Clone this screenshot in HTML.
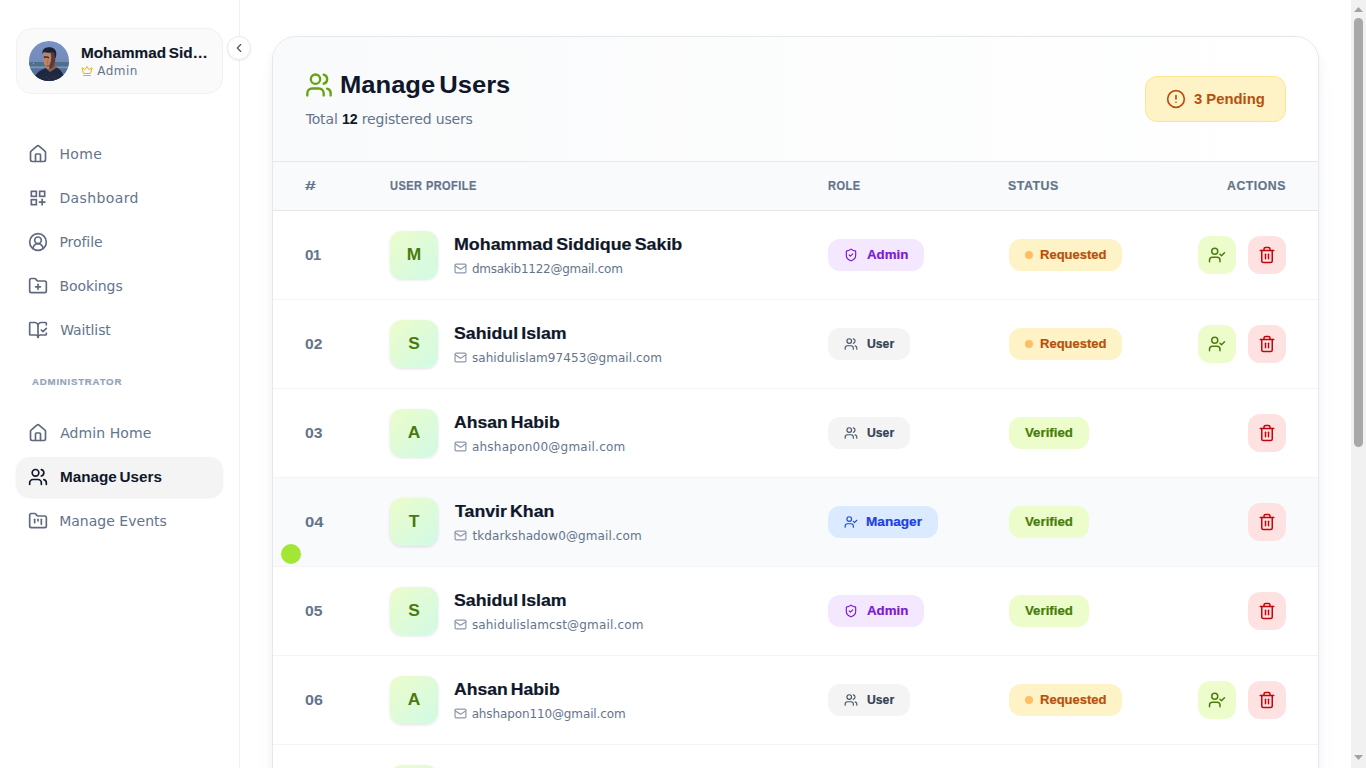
<!DOCTYPE html>
<html lang="en">
<head>
<meta charset="utf-8">
<title>Manage Users</title>
<style>
*{box-sizing:border-box;margin:0;padding:0}
button{border:0;padding:0;font:inherit;display:block;cursor:pointer}
a{text-decoration:none;cursor:pointer}
html,body{width:1366px;height:768px;overflow:hidden;background:#fff}
body{position:relative;font-family:"Liberation Sans",sans-serif;color:#0f172a}
.t{position:absolute;white-space:nowrap;line-height:24px;font-weight:400}
.ic{position:absolute;display:block;overflow:visible}
.side{position:absolute;left:0;top:0;width:240px;height:768px;background:#fff;border-right:1px solid #eef0f3}
.pcard{position:absolute;left:16px;top:28px;width:207px;height:66px;border-radius:16px;background:#fafafa;border:1px solid #f1f1f3}
.avatar{position:absolute;left:29px;top:41px}
.pname{left:81px;top:41px;font-size:14.200px;font-weight:700;color:#0f172a;word-spacing:-.1em;-webkit-text-stroke:.15px #0f172a}
.prole{left:97px;top:59px;font-size:12px;color:#64748b;font-family:"DejaVu Sans","Liberation Sans",sans-serif}
.nav{left:60px;font-size:14px;color:#64748b;font-family:"DejaVu Sans","Liberation Sans",sans-serif}
.nav.on{font-weight:700;color:#0f172a;word-spacing:-.1em;font-size:14.200px;font-family:"Liberation Sans",sans-serif}
.nactive{position:absolute;left:16px;top:457px;width:207px;height:40px;border-radius:14px;background:#f4f4f5;box-shadow:0 1px 2px rgba(15,23,42,.08)}
.sect{left:32px;top:370px;font-size:9.700px;font-weight:700;letter-spacing:1px;color:#94a3b8;-webkit-text-stroke:.2px #94a3b8}
.collapse{position:absolute;left:227px;top:36px;width:24px;height:24px;border-radius:50%;background:#fff;border:1px solid #e8eaee;box-shadow:0 1px 2px rgba(15,23,42,.07)}
.card{position:absolute;left:272px;top:36px;width:1047px;height:760px;border:1px solid #e5e7eb;border-radius:24px;background:#fff;overflow:hidden;box-shadow:0 20px 25px -5px rgba(100,116,139,.07),0 3px 8px -1px rgba(100,116,139,.09)}
.chead{position:relative;height:124px;background:linear-gradient(90deg,#f9fafb 0%,#fff 100%)}
.title{left:68px;top:30px;font-size:24px;line-height:36px;font-weight:700;color:#0f172a;word-spacing:-.12em}
.sub{left:32px;top:70px;font-size:14px;color:#64748b;font-family:"DejaVu Sans","Liberation Sans",sans-serif}
.sub b{color:#0f172a;font-weight:700;font-family:"Liberation Sans",sans-serif;font-size:14.200px}
.pend{position:absolute;left:872px;top:39px;width:141px;height:46px;border-radius:12px;background:#fef3c7;border:1px solid #fde68a}
.ptxt{left:49px;top:10px;font-size:14px;font-weight:700;color:#b8500b}
.thead{position:relative;height:50px;background:#f8fafc;border-top:1px solid #e5e7eb;border-bottom:1px solid #e5e7eb}
.th{top:12px;font-size:12px;font-weight:700;letter-spacing:.5px;color:#64748b;-webkit-text-stroke:.2px}
.th1{left:32px}.th2{left:117px}.th3{left:555px}.th4{left:735px}.th5{right:32px}
.row{position:relative;height:89px;border-bottom:1px solid #f3f4f6;background:#fff}
.row.hov{background:#f8fafc}
.num{left:32px;top:32px;font-size:15.200px;font-weight:700;color:#64748b}
.ava{position:absolute;left:117px;top:20px;width:48px;height:48px;border-radius:12px;background:linear-gradient(135deg,#ecfccb 0%,#d1fae5 100%);box-shadow:0 1px 3px rgba(15,23,42,.12)}
.ini{left:0;width:48px;text-align:center;top:12px;font-size:15.800px;font-weight:700;color:#4a7a0c;transform:scaleX(1.100)}
.name{left:181px;top:21px;font-size:15.600px;font-weight:700;color:#0f172a;word-spacing:-.1em;-webkit-text-stroke:.2px #0f172a}
.email{left:199px;top:45px;font-size:12px;color:#64748b;font-family:"DejaVu Sans","Liberation Sans",sans-serif}
.pill{position:absolute;top:28px;height:32px;border-radius:12px}
.pt{top:4px;font-size:13px;font-weight:700;-webkit-text-stroke:.2px}
.radmin{left:555px;width:96px;background:#f3e8ff}.ptadmin{left:39px;color:#7a1bd2}
.ruser{left:555px;width:82px;background:#f4f4f5}.ptuser{left:39px;color:#334155}
.rman{left:555px;width:110px;background:#dbeafe}.ptman{left:39px;color:#1a41e2}
.sreq{left:736px;width:113px;background:#fef3c7}.ptreq{left:32px;color:#b8500b}
.sver{left:736px;width:80px;background:#ecfccb}.ptver{left:16px;color:#467c0a}
.dot{position:absolute;left:16px;top:12px;width:8px;height:8px;border-radius:50%;background:#fcbf63}
.btn{position:absolute;top:25px;width:38px;height:38px;border-radius:12px}
.ok{left:925px;background:#ecfccb}
.del{left:975px;background:#fee2e2}
.cursor{position:absolute;left:281px;top:544px;width:20px;height:20px;border-radius:50%;background:#a3e635}
.sbar{position:absolute;left:1351px;top:0;width:15px;height:768px;background:#f1f1f1}
.sthumb{position:absolute;left:3px;top:18px;width:9px;height:429px;border-radius:5px;background:#a8a8a8}
.pname{transform:scale(1.0784,1);transform-origin:0 50%;left:80.54px;top:41.0px;letter-spacing:0.0px}
.prole{left:97.33px;top:59.0px;letter-spacing:0.45px}
.n1{left:59.46px;top:142.0px;letter-spacing:0.386px}
.n2{left:59.46px;top:186.0px;letter-spacing:0.388px}
.n3{left:59.46px;top:230.0px;letter-spacing:-0.063px}
.n4{left:59.46px;top:274.0px;letter-spacing:-0.073px}
.n5{left:60.22px;top:318.0px;letter-spacing:-0.128px}
.n6{left:60.21px;top:421.0px;letter-spacing:0.072px}
.n7{transform:scale(1.0757,1);transform-origin:0 50%;left:59.58px;top:465.0px;letter-spacing:0.0px}
.n8{left:59.16px;top:509.0px;letter-spacing:0.019px}
.sect{left:32.1px;top:370.0px;letter-spacing:0.744px}
.title{transform:scale(1.0656,1);transform-origin:0 50%;left:66.57px;top:30.0px;letter-spacing:0.0px}
.sub{left:32.7px;top:70.0px;letter-spacing:-0.152px}
.ptxt{transform:scale(1.0581,1);transform-origin:0 50%;left:47.56px;top:10.0px;letter-spacing:0.0px}
.th1{transform:scale(1.5888,1);transform-origin:0 50%;left:31.65px;top:12.0px}
.th2{transform:scale(0.9159,1);transform-origin:0 50%;left:116.52px;top:12.0px}
.th3{transform:scale(0.9207,1);transform-origin:0 50%;left:554.67px;top:12.0px}
.th4{transform:scale(1.0292,1);transform-origin:0 50%;left:734.58px;top:12.0px}
.th5{right:auto;transform:scale(1.0239,1);transform-origin:0 50%;left:953.51px;top:12.0px}
.nm1{transform:scale(1.1433,1);transform-origin:0 17px;left:180.54px;top:22.0px;letter-spacing:0.0px}
.em1{left:199.0px;top:46.0px;letter-spacing:-0.265px}
.nm2{transform:scale(1.1375,1);transform-origin:0 17px;left:180.57px;top:22.0px;letter-spacing:0.0px}
.em2{left:198.9px;top:46.0px;letter-spacing:0.074px}
.nm3{transform:scale(1.1269,1);transform-origin:0 17px;left:181.0px;top:22.0px;letter-spacing:0.0px}
.em3{left:198.9px;top:46.0px;letter-spacing:0.243px}
.nm4{transform:scale(1.1373,1);transform-origin:0 17px;left:181.51px;top:22.0px;letter-spacing:0.0px}
.em4{left:199.41px;top:46.0px;letter-spacing:0.108px}
.nm5{transform:scale(1.1375,1);transform-origin:0 17px;left:180.57px;top:22.0px;letter-spacing:0.0px}
.em5{left:198.9px;top:46.0px;letter-spacing:0.174px}
.nm6{transform:scale(1.1269,1);transform-origin:0 17px;left:181.0px;top:22.0px;letter-spacing:0.0px}
.em6{left:198.63px;top:46.0px;letter-spacing:-0.119px}
.ptadmin{transform:scale(1.0222,1);transform-origin:0 50%;left:38.67px;top:4.0px;letter-spacing:0.0px}
.ptuser{transform:scale(0.939,1);transform-origin:0 50%;left:38.62px;top:4.0px;letter-spacing:0.0px}
.ptman{transform:scale(1.046,1);transform-origin:0 50%;left:37.6px;top:4.0px;letter-spacing:0.0px}
.ptreq{transform:scale(1.0007,1);transform-origin:0 50%;left:30.52px;top:4.0px;letter-spacing:0.0px}
.ptver{transform:scale(1.0206,1);transform-origin:0 50%;left:15.59px;top:4.0px;letter-spacing:0.0px}
.num1{transform:scale(1.0,1);transform-origin:0 50%;left:32.0px;top:32.0px;letter-spacing:-0.8px}
.num2{transform:scale(1.0241,1);transform-origin:0 50%;left:31.53px;top:32.0px;letter-spacing:0.0px}
.num3{transform:scale(1.0372,1);transform-origin:0 50%;left:31.65px;top:32.0px;letter-spacing:0.0px}
.num4{transform:scale(1.0919,1);transform-origin:0 50%;left:31.65px;top:32.0px;letter-spacing:0.0px}
.num5{transform:scale(1.0341,1);transform-origin:0 50%;left:31.59px;top:32.0px;letter-spacing:0.0px}
.num6{transform:scale(1.0538,1);transform-origin:0 50%;left:31.55px;top:32.0px;letter-spacing:0.0px}
</style>
</head>
<body>
<aside class="side">
<nav>
<div class="pcard"></div>
<svg class="avatar" width="40" height="40" viewBox="0 0 40 40"><defs><clipPath id="avc"><circle cx="20" cy="20" r="20"/></clipPath><linearGradient id="sky" x1="0" y1="0" x2="0" y2="1"><stop offset="0" stop-color="#7b93c4"/><stop offset="1" stop-color="#6c82b0"/></linearGradient></defs><g clip-path="url(#avc)"><rect width="40" height="40" fill="url(#sky)"/><rect y="21" width="40" height="4.600" fill="#4f7089"/><rect y="25.600" width="40" height="1.700" fill="#7e93ba"/><rect y="27.300" width="40" height="12.700" fill="#54729a"/><path d="M4.500 40C5.500 34 9 30.500 13.500 28.500L16.500 27L21 30.500L27.500 26.500C32 28.500 35 33 36 40Z" fill="#1f2841"/><path d="M16.500 26.500L17 23L25.500 22L27 27L21 31Z" fill="#8a5a48"/><path d="M14.300 11.500C14 16 14.300 21 15.800 24.500C17 27.300 19 28.500 20.500 28.300C23 28 25.300 25 26 21C26.500 18 26.300 14 25.500 11Z" fill="#bd8463"/><path d="M21.500 12C23 16 22 21 20.500 24C20 26 20.300 28 20.500 28.300C23 28 25.300 25 26 21C26.600 17.500 26.300 14 25.500 11Z" fill="#5c3a38"/><path d="M13.400 13C12.800 9 15.500 6.200 19.500 6.200C24 5.800 27.500 8.500 27.300 13C27.200 15 26.800 16.500 26.200 17.500C26 14.500 25.500 12.500 24.500 11.500C21 12.200 17 11.800 14.800 11C14.400 11.800 14 12.500 13.400 13Z" fill="#1c2236"/><path d="M14.800 15.600C16.500 15 18.500 15.100 20 15.900L20 17.400C18.500 16.700 16.500 16.700 14.900 17.300Z" fill="#3a2a30"/><path d="M17.200 24.200C18.300 24.700 19.600 24.700 20.600 24.200L20.500 25.100C19.500 25.500 18.300 25.500 17.400 25.100Z" fill="#6a3f3a"/><path d="M18.600 18L19.600 22.300L17.800 22.300Z" fill="#a06c52"/><circle cx="4.500" cy="22.500" r=".7" fill="#4fd39a"/><g fill="#a33a3a"><circle cx="18" cy="36" r=".45"/><circle cx="21" cy="37" r=".45"/><circle cx="24" cy="36" r=".45"/><circle cx="27" cy="35" r=".45"/><circle cx="15" cy="36.500" r=".45"/><circle cx="19.500" cy="38.300" r=".45"/><circle cx="25.500" cy="37.800" r=".45"/><circle cx="29.500" cy="34" r=".45"/></g></g></svg>
<span class="t pname">Mohammad Sid…</span>
<svg class="ic" style="left:81px;top:65px;color:#eab308" width="12" height="12" viewBox="0 0 24 24" fill="none" stroke="currentColor" stroke-width="2" stroke-linecap="round" stroke-linejoin="round"><path d="M11.562 3.266a.5.5 0 0 1 .876 0L15.390 8.870a1 1 0 0 0 1.516.294L21.183 5.500a.5.5 0 0 1 .798.519l-2.834 10.246a1 1 0 0 1-.956.734H5.810a1 1 0 0 1-.957-.734L2.020 6.020a.5.5 0 0 1 .798-.519l4.276 3.664a1 1 0 0 0 1.516-.294z"/><path d="M5 21h14"/></svg><span class="t prole">Admin</span>
<svg class="ic" style="left:28px;top:144px;color:#5f687e" width="20" height="20" viewBox="0 0 24 24" fill="none" stroke="currentColor" stroke-width="2" stroke-linecap="round" stroke-linejoin="round"><path d="M15 21v-8a1 1 0 0 0-1-1h-4a1 1 0 0 0-1 1v8"/><path d="M3 10a2 2 0 0 1 .709-1.528l7-5.999a2 2 0 0 1 2.582 0l7 5.999A2 2 0 0 1 21 10v9a2 2 0 0 1-2 2H5a2 2 0 0 1-2-2z"/></svg><a class="t nav n1" style="top:142px">Home</a>
<svg class="ic" style="left:28px;top:188px;color:#5f687e" width="20" height="20" viewBox="0 0 24 24" fill="none" stroke="currentColor" stroke-width="2" stroke-linecap="round" stroke-linejoin="round"><rect x="4" y="4" width="6" height="6" stroke-linejoin="miter"/><rect x="14" y="4" width="6" height="6" stroke-linejoin="miter"/><rect x="4" y="14" width="6" height="6" stroke-linejoin="miter"/><path d="M17 13v8M13 17h8" stroke-linecap="butt"/></svg><a class="t nav n2" style="top:186px">Dashboard</a>
<svg class="ic" style="left:28px;top:232px;color:#5f687e" width="20" height="20" viewBox="0 0 24 24" fill="none" stroke="currentColor" stroke-width="2" stroke-linecap="round" stroke-linejoin="round"><path d="M18 20a6 6 0 0 0-12 0"/><circle cx="12" cy="10" r="4"/><circle cx="12" cy="12" r="10"/></svg><a class="t nav n3" style="top:230px">Profile</a>
<svg class="ic" style="left:28px;top:276px;color:#5f687e" width="20" height="20" viewBox="0 0 24 24" fill="none" stroke="currentColor" stroke-width="2" stroke-linecap="round" stroke-linejoin="round"><path d="M12 10v6"/><path d="M9 13h6"/><path d="M20 20a2 2 0 0 0 2-2V8a2 2 0 0 0-2-2h-7.9a2 2 0 0 1-1.69-.9L9.6 3.9A2 2 0 0 0 7.93 3H4a2 2 0 0 0-2 2v13a2 2 0 0 0 2 2Z"/></svg><a class="t nav n4" style="top:274px">Bookings</a>
<svg class="ic" style="left:28px;top:320px;color:#5f687e" width="20" height="20" viewBox="0 0 24 24" fill="none" stroke="currentColor" stroke-width="2" stroke-linecap="round" stroke-linejoin="round"><path d="M12 21V7"/><path d="m16 12 2 2 4-4"/><path d="M22 6V4a1 1 0 0 0-1-1h-5a4 4 0 0 0-4 4 4 4 0 0 0-4-4H3a1 1 0 0 0-1 1v13a1 1 0 0 0 1 1h6a3 3 0 0 1 3 3 3 3 0 0 1 3-3h6a1 1 0 0 0 1-1v-1.3"/></svg><a class="t nav n5" style="top:318px">Waitlist</a>
<svg class="ic" style="left:28px;top:423px;color:#5f687e" width="20" height="20" viewBox="0 0 24 24" fill="none" stroke="currentColor" stroke-width="2" stroke-linecap="round" stroke-linejoin="round"><path d="M15 21v-8a1 1 0 0 0-1-1h-4a1 1 0 0 0-1 1v8"/><path d="M3 10a2 2 0 0 1 .709-1.528l7-5.999a2 2 0 0 1 2.582 0l7 5.999A2 2 0 0 1 21 10v9a2 2 0 0 1-2 2H5a2 2 0 0 1-2-2z"/></svg><a class="t nav n6" style="top:421px">Admin Home</a>
<div class="nactive"></div>
<svg class="ic" style="left:28px;top:467px;color:#0f172a" width="20" height="20" viewBox="0 0 24 24" fill="none" stroke="currentColor" stroke-width="2" stroke-linecap="round" stroke-linejoin="round"><path d="M16 21v-2a4 4 0 0 0-4-4H6a4 4 0 0 0-4 4v2"/><circle cx="9" cy="7" r="4"/><path d="M22 21v-2a4 4 0 0 0-3-3.870"/><path d="M16 3.130a4 4 0 0 1 0 7.750"/></svg><a class="t nav n7 on" style="top:465px">Manage Users</a>
<svg class="ic" style="left:28px;top:511px;color:#5f687e" width="20" height="20" viewBox="0 0 24 24" fill="none" stroke="currentColor" stroke-width="2" stroke-linecap="round" stroke-linejoin="round"><path d="M4 20h16a2 2 0 0 0 2-2V8a2 2 0 0 0-2-2h-7.930a2 2 0 0 1-1.660-.9l-.820-1.200A2 2 0 0 0 7.930 3H4a2 2 0 0 0-2 2v13c0 1.100.9 2 2 2Z"/><path d="M8 10v4"/><path d="M12 10v2"/><path d="M16 10v6"/></svg><a class="t nav n8" style="top:509px">Manage Events</a>
<span class="t sect">ADMINISTRATOR</span>
</nav>
</aside>
<button class="collapse" aria-label="Collapse sidebar"><svg class="ic" style="left:4px;top:3.9px;color:#475569" width="14" height="14" viewBox="0 0 24 24" fill="none" stroke="currentColor" stroke-width="2" stroke-linecap="round" stroke-linejoin="round"><path d="m15 18-6-6 6-6"/></svg></button>
<main class="card">
<div class="chead">
<svg class="ic" style="left:32px;top:34px;color:#65a30d" width="28" height="28" viewBox="0 0 24 24" fill="none" stroke="currentColor" stroke-width="2" stroke-linecap="round" stroke-linejoin="round"><path d="M16 21v-2a4 4 0 0 0-4-4H6a4 4 0 0 0-4 4v2"/><circle cx="9" cy="7" r="4"/><path d="M22 21v-2a4 4 0 0 0-3-3.870"/><path d="M16 3.130a4 4 0 0 1 0 7.750"/></svg><h1 class="t title">Manage Users</h1>
<p class="t sub">Total <b>12</b> registered users</p>
<div class="pend"><svg class="ic" style="left:19.9px;top:12px;color:#b8500b" width="20" height="20" viewBox="0 0 24 24" fill="none" stroke="currentColor" stroke-width="2" stroke-linecap="round" stroke-linejoin="round"><circle cx="12" cy="12" r="10"/><path d="M12 8v4"/><path d="M12 16h.01"/></svg><span class="t ptxt">3 Pending</span></div>
</div>
<div class="thead">
<span class="t th th1">#</span><span class="t th th2">USER PROFILE</span><span class="t th th3">ROLE</span><span class="t th th4">STATUS</span><span class="t th th5">ACTIONS</span>
</div>
<div class="row">
<span class="t num num1">01</span>
<div class="ava"><span class="t ini iniM">M</span></div>
<span class="t name nm1">Mohammad Siddique Sakib</span>
<svg class="ic" style="left:181.4px;top:51.4px;color:#8f98aa" width="13" height="13" viewBox="0 0 24 24" fill="none" stroke="currentColor" stroke-width="2.2" stroke-linecap="round" stroke-linejoin="round"><rect width="20" height="16" x="2" y="4" rx="2"/><path d="m22 7-8.970 5.700a1.940 1.940 0 0 1-2.060 0L2 7"/></svg><span class="t email em1">dmsakib1122@gmail.com</span>
<div class="pill radmin"><svg class="ic" style="left:16px;top:9px;color:#7a1bd2" width="14" height="14" viewBox="0 0 24 24" fill="none" stroke="currentColor" stroke-width="2" stroke-linecap="round" stroke-linejoin="round"><path d="M20 13c0 5-3.500 7.500-7.660 8.950a1 1 0 0 1-.670-.010C7.500 20.500 4 18 4 13V6a1 1 0 0 1 1-1c2 0 4.500-1.200 6.240-2.720a1.170 1.170 0 0 1 1.520 0C14.510 3.810 17 5 19 5a1 1 0 0 1 1 1z"/><path d="m9 12 2 2 4-4"/></svg><span class="t pt ptadmin">Admin</span></div>
<div class="pill sreq"><i class="dot"></i><span class="t pt ptreq">Requested</span></div>
<button class="btn ok" aria-label="Verify user"><svg class="ic" style="left:10px;top:10px;color:#4d7c0f" width="18" height="18" viewBox="0 0 24 24" fill="none" stroke="currentColor" stroke-width="2" stroke-linecap="round" stroke-linejoin="round"><path d="m16 11 2 2 4-4"/><path d="M16 21v-2a4 4 0 0 0-4-4H6a4 4 0 0 0-4 4v2"/><circle cx="9" cy="7" r="4"/></svg></button>
<button class="btn del" aria-label="Delete user"><svg class="ic" style="left:10px;top:10px;color:#c4050d" width="18" height="18" viewBox="0 0 24 24" fill="none" stroke="currentColor" stroke-width="2" stroke-linecap="round" stroke-linejoin="round"><path d="M3 6h18"/><path d="M19 6v14c0 1-1 2-2 2H7c-1 0-2-1-2-2V6"/><path d="M8 6V4c0-1 1-2 2-2h4c1 0 2 1 2 2v2"/><path d="M10 11v6"/><path d="M14 11v6"/></svg></button>
</div>
<div class="row">
<span class="t num num2">02</span>
<div class="ava"><span class="t ini iniS">S</span></div>
<span class="t name nm2">Sahidul Islam</span>
<svg class="ic" style="left:181.4px;top:51.4px;color:#8f98aa" width="13" height="13" viewBox="0 0 24 24" fill="none" stroke="currentColor" stroke-width="2.2" stroke-linecap="round" stroke-linejoin="round"><rect width="20" height="16" x="2" y="4" rx="2"/><path d="m22 7-8.970 5.700a1.940 1.940 0 0 1-2.060 0L2 7"/></svg><span class="t email em2">sahidulislam97453@gmail.com</span>
<div class="pill ruser"><svg class="ic" style="left:16px;top:9px;color:#475569" width="14" height="14" viewBox="0 0 24 24" fill="none" stroke="currentColor" stroke-width="2" stroke-linecap="round" stroke-linejoin="round"><path d="M16 21v-2a4 4 0 0 0-4-4H6a4 4 0 0 0-4 4v2"/><circle cx="9" cy="7" r="4"/><path d="M22 21v-2a4 4 0 0 0-3-3.870"/><path d="M16 3.130a4 4 0 0 1 0 7.750"/></svg><span class="t pt ptuser">User</span></div>
<div class="pill sreq"><i class="dot"></i><span class="t pt ptreq">Requested</span></div>
<button class="btn ok" aria-label="Verify user"><svg class="ic" style="left:10px;top:10px;color:#4d7c0f" width="18" height="18" viewBox="0 0 24 24" fill="none" stroke="currentColor" stroke-width="2" stroke-linecap="round" stroke-linejoin="round"><path d="m16 11 2 2 4-4"/><path d="M16 21v-2a4 4 0 0 0-4-4H6a4 4 0 0 0-4 4v2"/><circle cx="9" cy="7" r="4"/></svg></button>
<button class="btn del" aria-label="Delete user"><svg class="ic" style="left:10px;top:10px;color:#c4050d" width="18" height="18" viewBox="0 0 24 24" fill="none" stroke="currentColor" stroke-width="2" stroke-linecap="round" stroke-linejoin="round"><path d="M3 6h18"/><path d="M19 6v14c0 1-1 2-2 2H7c-1 0-2-1-2-2V6"/><path d="M8 6V4c0-1 1-2 2-2h4c1 0 2 1 2 2v2"/><path d="M10 11v6"/><path d="M14 11v6"/></svg></button>
</div>
<div class="row">
<span class="t num num3">03</span>
<div class="ava"><span class="t ini iniA">A</span></div>
<span class="t name nm3">Ahsan Habib</span>
<svg class="ic" style="left:181.4px;top:51.4px;color:#8f98aa" width="13" height="13" viewBox="0 0 24 24" fill="none" stroke="currentColor" stroke-width="2.2" stroke-linecap="round" stroke-linejoin="round"><rect width="20" height="16" x="2" y="4" rx="2"/><path d="m22 7-8.970 5.700a1.940 1.940 0 0 1-2.060 0L2 7"/></svg><span class="t email em3">ahshapon00@gmail.com</span>
<div class="pill ruser"><svg class="ic" style="left:16px;top:9px;color:#475569" width="14" height="14" viewBox="0 0 24 24" fill="none" stroke="currentColor" stroke-width="2" stroke-linecap="round" stroke-linejoin="round"><path d="M16 21v-2a4 4 0 0 0-4-4H6a4 4 0 0 0-4 4v2"/><circle cx="9" cy="7" r="4"/><path d="M22 21v-2a4 4 0 0 0-3-3.870"/><path d="M16 3.130a4 4 0 0 1 0 7.750"/></svg><span class="t pt ptuser">User</span></div>
<div class="pill sver"><span class="t pt ptver">Verified</span></div>
<button class="btn del" aria-label="Delete user"><svg class="ic" style="left:10px;top:10px;color:#c4050d" width="18" height="18" viewBox="0 0 24 24" fill="none" stroke="currentColor" stroke-width="2" stroke-linecap="round" stroke-linejoin="round"><path d="M3 6h18"/><path d="M19 6v14c0 1-1 2-2 2H7c-1 0-2-1-2-2V6"/><path d="M8 6V4c0-1 1-2 2-2h4c1 0 2 1 2 2v2"/><path d="M10 11v6"/><path d="M14 11v6"/></svg></button>
</div>
<div class="row hov">
<span class="t num num4">04</span>
<div class="ava"><span class="t ini iniT">T</span></div>
<span class="t name nm4">Tanvir Khan</span>
<svg class="ic" style="left:181.4px;top:51.4px;color:#8f98aa" width="13" height="13" viewBox="0 0 24 24" fill="none" stroke="currentColor" stroke-width="2.2" stroke-linecap="round" stroke-linejoin="round"><rect width="20" height="16" x="2" y="4" rx="2"/><path d="m22 7-8.970 5.700a1.940 1.940 0 0 1-2.060 0L2 7"/></svg><span class="t email em4">tkdarkshadow0@gmail.com</span>
<div class="pill rman"><svg class="ic" style="left:16px;top:9px;color:#1d4ed8" width="14" height="14" viewBox="0 0 24 24" fill="none" stroke="currentColor" stroke-width="2" stroke-linecap="round" stroke-linejoin="round"><path d="m16 11 2 2 4-4"/><path d="M16 21v-2a4 4 0 0 0-4-4H6a4 4 0 0 0-4 4v2"/><circle cx="9" cy="7" r="4"/></svg><span class="t pt ptman">Manager</span></div>
<div class="pill sver"><span class="t pt ptver">Verified</span></div>
<button class="btn del" aria-label="Delete user"><svg class="ic" style="left:10px;top:10px;color:#c4050d" width="18" height="18" viewBox="0 0 24 24" fill="none" stroke="currentColor" stroke-width="2" stroke-linecap="round" stroke-linejoin="round"><path d="M3 6h18"/><path d="M19 6v14c0 1-1 2-2 2H7c-1 0-2-1-2-2V6"/><path d="M8 6V4c0-1 1-2 2-2h4c1 0 2 1 2 2v2"/><path d="M10 11v6"/><path d="M14 11v6"/></svg></button>
</div>
<div class="row">
<span class="t num num5">05</span>
<div class="ava"><span class="t ini iniS">S</span></div>
<span class="t name nm5">Sahidul Islam</span>
<svg class="ic" style="left:181.4px;top:51.4px;color:#8f98aa" width="13" height="13" viewBox="0 0 24 24" fill="none" stroke="currentColor" stroke-width="2.2" stroke-linecap="round" stroke-linejoin="round"><rect width="20" height="16" x="2" y="4" rx="2"/><path d="m22 7-8.970 5.700a1.940 1.940 0 0 1-2.060 0L2 7"/></svg><span class="t email em5">sahidulislamcst@gmail.com</span>
<div class="pill radmin"><svg class="ic" style="left:16px;top:9px;color:#7a1bd2" width="14" height="14" viewBox="0 0 24 24" fill="none" stroke="currentColor" stroke-width="2" stroke-linecap="round" stroke-linejoin="round"><path d="M20 13c0 5-3.500 7.500-7.660 8.950a1 1 0 0 1-.670-.010C7.500 20.500 4 18 4 13V6a1 1 0 0 1 1-1c2 0 4.500-1.200 6.240-2.720a1.170 1.170 0 0 1 1.520 0C14.510 3.810 17 5 19 5a1 1 0 0 1 1 1z"/><path d="m9 12 2 2 4-4"/></svg><span class="t pt ptadmin">Admin</span></div>
<div class="pill sver"><span class="t pt ptver">Verified</span></div>
<button class="btn del" aria-label="Delete user"><svg class="ic" style="left:10px;top:10px;color:#c4050d" width="18" height="18" viewBox="0 0 24 24" fill="none" stroke="currentColor" stroke-width="2" stroke-linecap="round" stroke-linejoin="round"><path d="M3 6h18"/><path d="M19 6v14c0 1-1 2-2 2H7c-1 0-2-1-2-2V6"/><path d="M8 6V4c0-1 1-2 2-2h4c1 0 2 1 2 2v2"/><path d="M10 11v6"/><path d="M14 11v6"/></svg></button>
</div>
<div class="row">
<span class="t num num6">06</span>
<div class="ava"><span class="t ini iniA">A</span></div>
<span class="t name nm6">Ahsan Habib</span>
<svg class="ic" style="left:181.4px;top:51.4px;color:#8f98aa" width="13" height="13" viewBox="0 0 24 24" fill="none" stroke="currentColor" stroke-width="2.2" stroke-linecap="round" stroke-linejoin="round"><rect width="20" height="16" x="2" y="4" rx="2"/><path d="m22 7-8.970 5.700a1.940 1.940 0 0 1-2.060 0L2 7"/></svg><span class="t email em6">ahshapon110@gmail.com</span>
<div class="pill ruser"><svg class="ic" style="left:16px;top:9px;color:#475569" width="14" height="14" viewBox="0 0 24 24" fill="none" stroke="currentColor" stroke-width="2" stroke-linecap="round" stroke-linejoin="round"><path d="M16 21v-2a4 4 0 0 0-4-4H6a4 4 0 0 0-4 4v2"/><circle cx="9" cy="7" r="4"/><path d="M22 21v-2a4 4 0 0 0-3-3.870"/><path d="M16 3.130a4 4 0 0 1 0 7.750"/></svg><span class="t pt ptuser">User</span></div>
<div class="pill sreq"><i class="dot"></i><span class="t pt ptreq">Requested</span></div>
<button class="btn ok" aria-label="Verify user"><svg class="ic" style="left:10px;top:10px;color:#4d7c0f" width="18" height="18" viewBox="0 0 24 24" fill="none" stroke="currentColor" stroke-width="2" stroke-linecap="round" stroke-linejoin="round"><path d="m16 11 2 2 4-4"/><path d="M16 21v-2a4 4 0 0 0-4-4H6a4 4 0 0 0-4 4v2"/><circle cx="9" cy="7" r="4"/></svg></button>
<button class="btn del" aria-label="Delete user"><svg class="ic" style="left:10px;top:10px;color:#c4050d" width="18" height="18" viewBox="0 0 24 24" fill="none" stroke="currentColor" stroke-width="2" stroke-linecap="round" stroke-linejoin="round"><path d="M3 6h18"/><path d="M19 6v14c0 1-1 2-2 2H7c-1 0-2-1-2-2V6"/><path d="M8 6V4c0-1 1-2 2-2h4c1 0 2 1 2 2v2"/><path d="M10 11v6"/><path d="M14 11v6"/></svg></button>
</div>
<div class="row">
<div class="ava"></div>
</div>
</main>
<div class="cursor"></div>
<div class="sbar"><svg class="ic" style="left:3px;top:7px" width="9" height="5" viewBox="0 0 9 5"><path d="M0 5h9L4.500 0z" fill="#a3a3a3"/></svg><div class="sthumb"></div><svg class="ic" style="left:3px;top:755px" width="9" height="5" viewBox="0 0 9 5"><path d="M0 0h9L4.500 5z" fill="#a3a3a3"/></svg></div>
</body>
</html>
